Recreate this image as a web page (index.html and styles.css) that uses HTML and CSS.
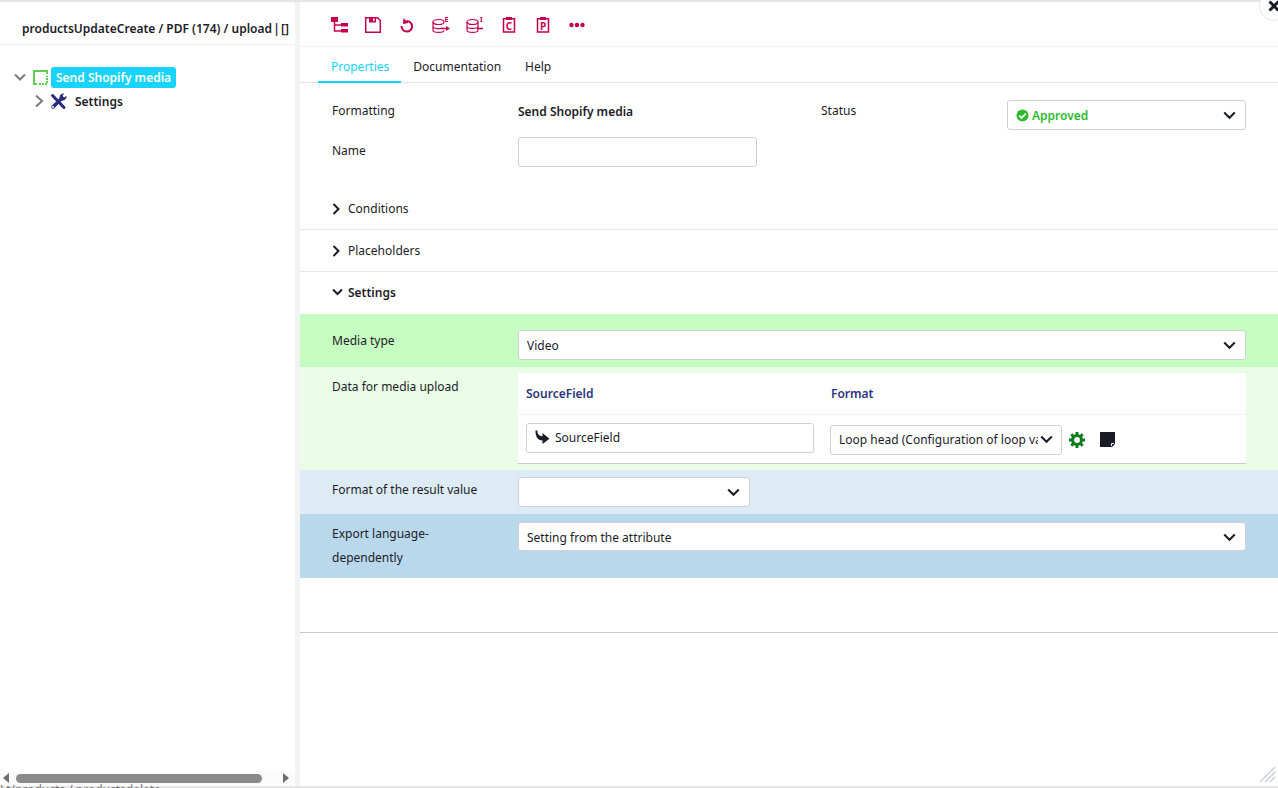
FILE: index.html
```html
<!DOCTYPE html>
<html>
<head>
  <title>Send Shopify media</title>
  <link rel="stylesheet" href="styles.css">
</head>
<body>
  <div class="dialog">
    <aside class="tree-panel">
      <div class="tree-title">productsUpdateCreate / PDF (174) / upload&#8202;|&#8202;[]</div>
      <ul class="tree">
        <li class="tree-row">
          <svg class="tree-arrow" width="12" height="12" viewBox="0 0 12 12"><path d="M1 3.500 6 8.500 11 3.500" fill="none" stroke="#7b7b7b" stroke-width="2"/></svg>
          <svg class="tree-node-icon" width="15" height="15" viewBox="0 0 15 15"><path d="M14 4V1H1V14H4" fill="none" stroke="#5fcf4f" stroke-width="2"/><path d="M6 14H14V6" fill="none" stroke="#5fcf4f" stroke-width="2" stroke-dasharray="2 1"/></svg>
          <span class="tree-selected">Send Shopify media</span>
        </li>
        <li class="tree-row tree-child">
          <svg class="tree-arrow" width="12" height="14" viewBox="0 0 12 14"><path d="M3 1.500 9 7 3 12.500" fill="none" stroke="#7b7b7b" stroke-width="2"/></svg>
          <svg class="tree-tools" width="17" height="17" viewBox="0 0 17 17"><path d="M3 14 12 5" stroke="#2a2a7c" stroke-width="3.500" stroke-linecap="round"/><path d="M2.500 2.500 14 14.500" stroke="#2a2a7c" stroke-width="3" stroke-linecap="round"/><path d="M9.500 4.500A4 4 0 0 1 14 .5L12.500 3 14 4.500 16.500 3A4 4 0 0 1 12 7.500Z" fill="#2a2a7c"/><circle cx="3" cy="14" r="1" fill="#ffffff"/></svg>
          <span>Settings</span>
        </li>
      </ul>
      <div class="h-scroll">
        <span class="scroll-left"></span>
        <span class="scroll-thumb"></span>
        <span class="scroll-right"></span>
      </div>
    </aside>

    <main class="detail">
      <div class="toolbar">
        <svg width="18" height="18" viewBox="0 0 18 18"><path d="M1 1H8V6H1ZM11 7H18V10.500H11ZM11 13H18V16.500H11Z" fill="#c4004f"/><path d="M4.500 5V15H11M4.500 9H11" fill="none" stroke="#c4004f" stroke-width="1.500"/></svg>
        <svg width="18" height="18" viewBox="0 0 18 18"><path d="M1.700 1.700H13.500L16.300 4.500V16.300H1.700Z" fill="none" stroke="#c4004f" stroke-width="1.500"/><path d="M5 1.500H12V6.500H5Z" fill="#c4004f"/><path d="M9 2.500H10.500V5H9Z" fill="#fff"/></svg>
        <svg width="18" height="18" viewBox="0 0 18 18"><path d="M8.500 5A5.300 5.300 0 1 1 3.500 10" fill="none" stroke="#c4004f" stroke-width="2"/><path d="M5.500 2 10.500 7 5 8Z" fill="#c4004f"/></svg>
        <svg width="18" height="18" viewBox="0 0 18 18"><ellipse cx="6.500" cy="6" rx="5.500" ry="2.500" fill="none" stroke="#c4004f" stroke-width="1.200"/><path d="M1 6V14.500C1 17 12 17 12 14.500M1 10.500C1 13 9 13 10.500 12" fill="none" stroke="#c4004f" stroke-width="1.200"/><path d="M9 12.500H15" stroke="#c4004f" stroke-width="1.500"/><path d="M14 10 18 12.500 14 15Z" fill="#c4004f"/><text x="12.500" y="5.500" class="icon-letter">E</text></svg>
        <svg width="18" height="18" viewBox="0 0 18 18"><ellipse cx="6.500" cy="6" rx="5.500" ry="2.500" fill="none" stroke="#c4004f" stroke-width="1.200"/><path d="M1 6V14.500C1 17 12 17 12 14.500V6M1 10.500C1 13 12 13 12 10.500" fill="none" stroke="#c4004f" stroke-width="1.200"/><path d="M11 12.500H17" stroke="#c4004f" stroke-width="1.500"/><text x="14" y="5.500" class="icon-letter">I</text></svg>
        <svg width="18" height="18" viewBox="0 0 18 18"><path d="M3.500 2.700H14.500V16H3.500Z" fill="none" stroke="#c4004f" stroke-width="1.500"/><path d="M6 1H12V4H6Z" fill="#c4004f"/><text x="9" y="13.500" class="icon-mark">C</text></svg>
        <svg width="18" height="18" viewBox="0 0 18 18"><path d="M3.500 2.700H14.500V16H3.500Z" fill="none" stroke="#c4004f" stroke-width="1.500"/><path d="M6 1H12V4H6Z" fill="#c4004f"/><text x="9" y="13.500" class="icon-mark">P</text></svg>
        <svg width="18" height="18" viewBox="0 0 18 18"><circle cx="3.500" cy="9" r="2.200" fill="#c4004f"/><circle cx="9" cy="9" r="2.200" fill="#c4004f"/><circle cx="14.500" cy="9" r="2.200" fill="#c4004f"/></svg>
      </div>

      <div class="tabs">
        <span class="tab active">Properties</span>
        <span class="tab">Documentation</span>
        <span class="tab">Help</span>
      </div>

      <div class="form-head">
        <div class="head-row">
          <label>Formatting</label>
          <strong class="head-value">Send Shopify media</strong>
          <label class="status-label">Status</label>
          <div class="select status-select">
            <svg width="13" height="13" viewBox="0 0 13 13"><circle cx="6.500" cy="6.500" r="6" fill="#2dbb2d"/><path d="M3.300 6.700 5.600 9 9.800 4.500" fill="none" stroke="#fff" stroke-width="1.800"/></svg>
            <span class="select-text approved">Approved</span>
            <svg class="chevron" width="13" height="9" viewBox="0 0 13 9"><path d="M1.200 1.500 6.500 6.800 11.800 1.500" fill="none" stroke="#1c1c28" stroke-width="2"/></svg>
          </div>
        </div>
        <div class="head-row name-row">
          <label>Name</label>
          <input class="text-input" type="text">
        </div>
      </div>

      <div class="section">
        <svg width="9" height="12" viewBox="0 0 9 12"><path d="M1.500 1 6.500 6 1.500 11" fill="none" stroke="#1c1c28" stroke-width="2"/></svg>
        <span>Conditions</span>
      </div>
      <div class="section">
        <svg width="9" height="12" viewBox="0 0 9 12"><path d="M1.500 1 6.500 6 1.500 11" fill="none" stroke="#1c1c28" stroke-width="2"/></svg>
        <span>Placeholders</span>
      </div>
      <div class="section open">
        <svg width="11" height="8" viewBox="0 0 11 8"><path d="M1 1.500 5.500 6 10 1.500" fill="none" stroke="#1c1c28" stroke-width="2"/></svg>
        <span>Settings</span>
      </div>

      <div class="setting media-type">
        <label>Media type</label>
        <div class="select">
          <span class="select-text">Video</span>
          <svg class="chevron" width="13" height="9" viewBox="0 0 13 9"><path d="M1.200 1.500 6.500 6.800 11.800 1.500" fill="none" stroke="#1c1c28" stroke-width="2"/></svg>
        </div>
      </div>

      <div class="setting media-upload">
        <label>Data for media upload</label>
        <div class="upload-table">
          <div class="upload-head">
            <span class="col-source">SourceField</span>
            <span>Format</span>
          </div>
          <div class="upload-row">
            <div class="source-input">
              <svg width="15" height="15" viewBox="0 0 15 15"><path d="M2.500 .5C2 4 4 6 7.500 6.300V3L14.500 8.700 7.500 14V10.500C3 10.500 .2 6.500 .5 .5Z" fill="#1c1c28"/></svg>
              <span>SourceField</span>
            </div>
            <div class="select format-select">
              <span class="select-text">Loop head (Configuration of loop variables)</span>
              <svg class="chevron" width="13" height="9" viewBox="0 0 13 9"><path d="M1.200 1.500 6.500 6.800 11.800 1.500" fill="none" stroke="#1c1c28" stroke-width="2"/></svg>
            </div>
            <svg class="gear" width="16" height="16" viewBox="0 0 16 16"><circle cx="8" cy="8" r="4.500" fill="none" stroke="#0c7c1c" stroke-width="3"/><path d="M8 0V3M8 13V16M0 8H3M13 8H16M2.300 2.300 4.500 4.500M11.500 11.500 13.700 13.700M2.300 13.700 4.500 11.500M11.500 4.500 13.700 2.300" stroke="#0c7c1c" stroke-width="3"/></svg>
            <svg class="note" width="15" height="15" viewBox="0 0 15 15"><path d="M0 0H15V12L12 15H0Z" fill="#1c1c28"/><path d="M11.500 14V11.500H14" fill="none" stroke="#fff" stroke-width="1"/></svg>
          </div>
        </div>
      </div>

      <div class="setting result-format">
        <label>Format of the result value</label>
        <div class="select short-select">
          <span class="select-text"></span>
          <svg class="chevron" width="13" height="9" viewBox="0 0 13 9"><path d="M1.200 1.500 6.500 6.800 11.800 1.500" fill="none" stroke="#1c1c28" stroke-width="2"/></svg>
        </div>
      </div>

      <div class="setting export-lang">
        <label>Export language-dependently</label>
        <div class="select">
          <span class="select-text">Setting from the attribute</span>
          <svg class="chevron" width="13" height="9" viewBox="0 0 13 9"><path d="M1.200 1.500 6.500 6.800 11.800 1.500" fill="none" stroke="#1c1c28" stroke-width="2"/></svg>
        </div>
      </div>

      <div class="form-end"></div>
    </main>
  </div>

  <button class="close-btn">
    <svg width="12" height="12" viewBox="0 0 12 12"><path d="M1.500 1.500 10.500 10.500M10.500 1.500 1.500 10.500" stroke="#1c1c28" stroke-width="3"/></svg>
  </button>
  <svg class="resize-grip" width="16" height="16" viewBox="0 0 16 16"><path d="M0 15 15 0M5 15 15 5M10 15 15 10" stroke="#c9ced6" stroke-width="1.500"/></svg>
  <div class="behind-text">Lt/products / productsdelete</div>
</body>
</html>
```

FILE: styles.css
```css
html, body {
  height: 100%;
}

body {
  margin: 0;
  overflow: hidden;
  position: relative;
  background-color: #e6e6e6;
  color: #1c1c28;
  font-family: "Noto Sans", sans-serif;
  font-size: 12px;
}

label {
  display: block;
}

.dialog {
  display: flex;
  height: 784px;
  margin-top: 2px;
  background-color: #f3f3f3;
}

/* Left tree */
.tree-panel {
  width: 295px;
  display: flex;
  flex-direction: column;
  background-color: #ffffff;
  border-radius: 0 4px 0 0;
}
.tree-title {
  height: 43px;
  padding-left: 22px;
  box-sizing: border-box;
  padding-top: 18px;
  line-height: 18px;
  font-weight: 600;
  white-space: nowrap;
  border-bottom: 1px solid #ededed;
}
.tree {
  list-style-type: none;
  margin: 0;
  padding: 20px 0 0 14px;
  flex-grow: 1;
}
.tree-row {
  display: flex;
  align-items: center;
  height: 24px;
  font-weight: 600;
}
.tree-arrow {
  margin-right: 7px;
}
.tree-node-icon {
  margin-right: 3px;
}
.tree-selected {
  background-color: #18d4fa;
  color: #ffffff;
  font-weight: 600;
  line-height: 21px;
  padding: 0 5px;
  border-radius: 3px;
}
.tree-child {
  padding-left: 19px;
}
.tree-tools {
  margin: 0 8px 0 -2px;
}
.h-scroll {
  display: flex;
  align-items: center;
  height: 14px;
  padding: 0 5px 1px 3px;
  background-color: #fcfcfc;
}
.scroll-left {
  border-right: 6px solid #6e6e6e;
  border-top: 5px solid transparent;
  border-bottom: 5px solid transparent;
}
.scroll-thumb {
  width: 246px;
  height: 9px;
  margin-left: 7px;
  background-color: #8a8a8a;
  border-radius: 5px;
}
.scroll-right {
  margin-left: 21px;
  border-left: 6px solid #6e6e6e;
  border-top: 5px solid transparent;
  border-bottom: 5px solid transparent;
}

/* Right side */
.detail {
  width: 978px;
  margin-left: 5px;
  background-color: #ffffff;
}
.toolbar {
  display: flex;
  align-items: center;
  gap: 16px;
  height: 43px;
  padding: 1px 0 0 30px;
  border-bottom: 1px solid #f0f0f0;
}
.icon-letter {
  font-size: 7px;
  font-weight: 700;
  fill: #c4004f;
}
.icon-mark {
  font-size: 10px;
  font-weight: 700;
  fill: #c4004f;
  text-anchor: middle;
}
.tabs {
  display: flex;
  height: 35px;
  padding-left: 18px;
  border-bottom: 1px solid #e4e4e4;
}
.tab {
  padding: 0 12px;
  line-height: 40px;
}
.tab.active {
  padding-left: 13px;
  color: #18d4fa;
  border-bottom: 2px solid #18d4fa;
  height: 34px;
}

.form-head {
  padding: 18px 32px 0;
  height: 105px;
  box-sizing: border-box;
}
.head-row {
  display: grid;
  grid-template-columns: 186px 303px 186px 239px;
  align-items: start;
}
.head-row label {
  line-height: 20px;
}
.head-value {
  line-height: 22px;
  font-weight: 600;
}
.name-row {
  grid-template-columns: 186px 239px;
  margin-top: 7px;
}
.name-row label {
  line-height: 27px;
}
.status-select {
  margin-top: -1px;
}
.approved {
  color: #2dbb2d;
  font-weight: 600;
  margin-left: 3px;
}
.text-input {
  height: 30px;
  box-sizing: border-box;
  border: 1px solid #ced0d6;
  border-radius: 3px;
  background-color: #ffffff;
}

.select {
  display: flex;
  align-items: center;
  height: 30px;
  box-sizing: border-box;
  padding: 0 8px;
  background-color: #ffffff;
  border: 1px solid #ced0d6;
  border-radius: 3px;
}
.select-text {
  flex-grow: 1;
  overflow: hidden;
  white-space: nowrap;
}
.chevron {
  flex-shrink: 0;
  margin-left: 2px;
  margin-right: 1px;
}

.section {
  display: flex;
  align-items: center;
  gap: 7px;
  height: 41px;
  padding-left: 32px;
  border-bottom: 1px solid #e6e6e6;
}
.section.open {
  font-weight: 600;
  border-bottom: none;
  gap: 5px;
  height: 40px;
  padding-bottom: 2px;
}

.setting {
  display: grid;
  grid-template-columns: 186px 728px;
  padding: 0 32px;
}
.setting label {
  line-height: 24px;
}
.media-type {
  height: 53px;
  padding-top: 16px;
  box-sizing: border-box;
  background-color: #c6fdc0;
}
.media-type label {
  margin-top: -1px;
}
.media-upload {
  height: 103px;
  padding-top: 6px;
  box-sizing: border-box;
  background-color: #e9fde7;
}
.media-upload label {
  padding-top: 2px;
}
.upload-table {
  height: 91px;
  box-sizing: border-box;
  background-color: #ffffff;
  border-bottom: 1px solid #c8c8c8;
}
.upload-head {
  display: flex;
  height: 41px;
  align-items: center;
  padding-left: 8px;
  font-weight: 600;
  color: #2a3480;
  border-bottom: 1px solid #f0f0f0;
}
.col-source {
  width: 305px;
}
.upload-row {
  display: flex;
  align-items: center;
  height: 49px;
  padding-left: 8px;
}
.source-input {
  display: flex;
  align-items: center;
  gap: 5px;
  width: 288px;
  height: 30px;
  box-sizing: border-box;
  padding: 0 0 2px 8px;
  margin-top: -3px;
  border: 1px solid #ced0d6;
  border-radius: 3px;
}
.format-select {
  width: 232px;
  margin-left: 16px;
  padding-right: 7px;
}
.gear {
  margin-left: 7px;
}
.note {
  margin-left: 15px;
}
.result-format {
  height: 44px;
  padding-top: 7px;
  box-sizing: border-box;
  background-color: #dcebf4;
}
.result-format label {
  padding-top: 1px;
}
.short-select {
  width: 232px;
}
.export-lang {
  height: 64px;
  padding-top: 8px;
  box-sizing: border-box;
  background-color: #b9d8eb;
}
.export-lang label {
  max-width: 150px;
}
.export-lang .select {
  height: 29px;
  padding-top: 1px;
}
.form-end {
  height: 54px;
  border-bottom: 1px solid #c8c8c8;
}

/* Overlays */
.close-btn {
  position: absolute;
  top: -9px;
  right: -11px;
  width: 30px;
  height: 30px;
  padding: 0;
  display: flex;
  align-items: center;
  justify-content: center;
  background-color: #ffffff;
  border: 1px solid #e6e6e6;
  border-radius: 50%;
}
.resize-grip {
  position: absolute;
  right: 2px;
  bottom: 5px;
}
.behind-text {
  position: absolute;
  left: 0;
  bottom: -9px;
  color: #777777;
  font-size: 12px;
  line-height: 14px;
}
```
